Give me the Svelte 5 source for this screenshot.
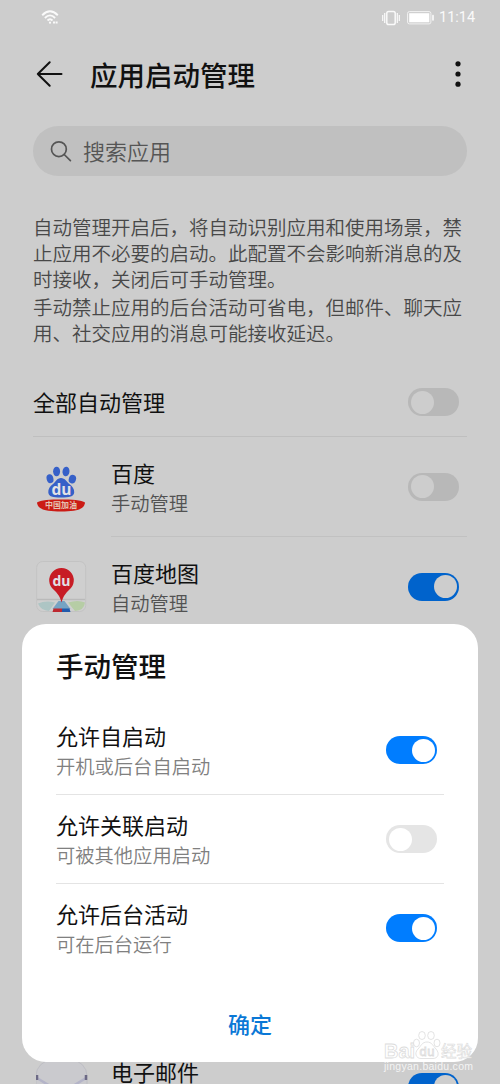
<script>
  let allAuto = $state(false);

  let apps = $state([
    { id: 'baidu', name: '百度', auto: false },
    { id: 'map', name: '百度地图', auto: true },
  ]);

  let mailAuto = $state(true);

  let options = $state([
    { name: '允许自启动', hint: '开机或后台自启动', on: true },
    { name: '允许关联启动', hint: '可被其他应用启动', on: false },
    { name: '允许后台活动', hint: '可在后台运行', on: true },
  ]);
</script>

{#snippet toggle(on, label, flip)}
  <button class="toggle" class:on role="switch" aria-checked={on} aria-label={label} onclick={flip}>
    <span class="knob"></span>
  </button>
{/snippet}

{#snippet appIcon(id)}
  {#if id === 'baidu'}
    <svg class="appIcon" viewBox="0 0 54 54">
      <g transform="translate(0 4.5)">
        <g fill="#3660c8">
          <ellipse cx="20.6" cy="7" rx="3.5" ry="4.8" />
          <ellipse cx="30" cy="7" rx="3.5" ry="4.8" transform="rotate(8 30 7)" />
          <ellipse cx="14" cy="14.2" rx="3.4" ry="4.5" transform="rotate(-14 14 14.2)" />
          <ellipse cx="36.4" cy="14.6" rx="3.6" ry="4.4" transform="rotate(18 36.4 14.6)" />
          <path d="M25 13.500c-4 0-5.500 4-8 6-3 2.300-5 5-4.700 8.500.6 4.300 4 5 12.700 5s12.600-.7 13.200-5c.3-3.500-2-6.200-4.800-8.500-2.600-2-4.400-6-8.400-6z" />
        </g>
        <text x="25.500" y="30.500" class="du" font-size="15.500">du</text>
        <path d="M1 38c3-2.500 14-3 24-3s21 .5 24 3c-.5 7-9 9-24 9S1.500 45 1 38z" fill="#cb1b15" />
        <text x="25" y="43.800" class="slogan">中国加油</text>
      </g>
    </svg>
  {:else if id === 'map'}
    <svg class="appIcon" viewBox="0 0 54 54">
      <rect x=".7" y="1.500" width="49" height="50" rx="6" fill="#cfcfcf" stroke="#c3c3c3" />
      <path d="M1 39.500h48" stroke="#bababa" stroke-width="1.400" />
      <path d="M2 43.500q8-3.500 17-1l-6 8.500Q5 50.500 2 43.500z" fill="#adc5c4" />
      <path d="M32 42.500q10-3 17 0-1 8-10 8.500z" fill="#b6cda5" />
      <path d="M22.500 41h6l6 8h-18z" fill="#76a3c3" />
      <path d="M17.500 48.500H26V52h-9.500z" fill="#bd2931" />
      <path d="M26 48.500h7.500l1 3.500H26z" fill="#225bac" />
      <path d="M25.500 42.500c-1.500-6-4-9-7.500-12.500a12.300 12.300 0 1 1 15 0c-3.500 3.500-6 6.500-7.500 12.500z" fill="#c71c25" />
      <text x="25.500" y="25.500" class="du" font-size="14">du</text>
    </svg>
  {:else}
    <svg class="appIcon" viewBox="0 0 54 54">
      <rect x="0" y="0" width="51" height="51" rx="16" fill="#cacace" stroke="#bebec4" />
      <path d="M1 18l13 8M50 18l-13 8" stroke="#b4b4c8" stroke-width="2.500" />
      <path d="M1 15v5M50 15v5" stroke="#6c6985" stroke-width="2.500" />
    </svg>
  {/if}
{/snippet}

<div class="screen">
  <div class="statusBar">
    <svg class="wifi" width="20" height="17" viewBox="0 0 20 17" fill="none" stroke="#fafafa" stroke-width="1.900">
      <path d="M1.200 6.200Q9 -1.500 16.800 6.200M3.900 9Q9 3.800 14.100 9M6.500 11.500Q9 9 11.500 11.500" />
      <circle cx="9" cy="13.700" r="1.100" fill="#fafafa" stroke="none" />
      <path d="M12 13.500h5" stroke-width="2.200" stroke-dasharray="2 .6" />
    </svg>
    <svg class="vibrate" width="18" height="16" viewBox="0 0 18 16" fill="none" stroke="#fafafa" stroke-width="1.500">
      <rect x="4.800" y="1.500" width="8.400" height="13" rx="1.800" />
      <path d="M2.700 3v10M15.300 3v10M.7 5v6M17.300 5v6" stroke-width="1.200" />
    </svg>
    <svg class="battery" width="28" height="14" viewBox="0 0 28 14">
      <rect x=".6" y=".6" width="23.300" height="12.300" rx="1.800" fill="none" stroke="#f2f2f2" />
      <rect x="2.200" y="2.200" width="20.100" height="9.100" fill="#fff" />
      <rect x="25" y="3.700" width="2" height="6" rx=".8" fill="#f2f2f2" />
    </svg>
    <span class="clock">11:14</span>
  </div>

  <header class="titleBar">
    <svg width="28" height="28" viewBox="0 0 28 28" fill="none" stroke="#111" stroke-width="2" stroke-linecap="round" stroke-linejoin="round">
      <path d="M14.700 2.300 2.800 14l11.900 11.700M2.800 14h23.700" />
    </svg>
    <h1>应用启动管理</h1>
    <svg width="8" height="28" viewBox="0 0 8 28" fill="#111">
      <circle cx="4" cy="3.800" r="2.600" />
      <circle cx="4" cy="14" r="2.600" />
      <circle cx="4" cy="24.200" r="2.600" />
    </svg>
  </header>

  <div class="searchBar">
    <svg width="22" height="22" viewBox="0 0 22 22" fill="none" stroke="#555" stroke-width="1.700" stroke-linecap="round">
      <circle cx="8.900" cy="9.200" r="7.400" />
      <path d="m14.200 14.500 6.200 6.200" />
    </svg>
    <span>搜索应用</span>
  </div>

  <div class="description">
    <p>自动管理开启后，将自动识别应用和使用场景，禁<br />止应用不必要的启动。此配置不会影响新消息的及<br />时接收，关闭后可手动管理。</p>
    <p>手动禁止应用的后台活动可省电，但邮件、聊天应<br />用、社交应用的消息可能接收延迟。</p>
  </div>

  <div class="allRow">
    <span class="name">全部自动管理</span>
    {@render toggle(allAuto, '全部自动管理', () => (allAuto = !allAuto))}
  </div>

  {#each apps as app (app.id)}
    <div class="appRow">
      {@render appIcon(app.id)}
      <div class="appBody">
        <div class="labels">
          <span class="name">{app.name}</span>
          <span class="hint">{app.auto ? '自动管理' : '手动管理'}</span>
        </div>
        {@render toggle(app.auto, app.name, () => (app.auto = !app.auto))}
      </div>
    </div>
  {/each}

  <div class="appRow mailRow">
    {@render appIcon('mail')}
    <div class="appBody">
      <span class="name">电子邮件</span>
      {@render toggle(mailAuto, '电子邮件', () => (mailAuto = !mailAuto))}
    </div>
  </div>

  <div class="dialog" role="dialog">
    <h2>手动管理</h2>
    {#each options as option}
      <div class="option">
        <div class="labels">
          <span class="name">{option.name}</span>
          <span class="hint">{option.hint}</span>
        </div>
        {@render toggle(option.on, option.name, () => (option.on = !option.on))}
      </div>
    {/each}
    <button class="confirm">确定</button>
  </div>

  <svg class="watermark" width="98" height="46" viewBox="0 0 98 46">
    <g fill="#fff" stroke="#dcdcdc" stroke-width=".8">
      <text x="1" y="27" font-size="21" font-weight="bold" textLength="31" lengthAdjust="spacingAndGlyphs">Bai</text>
      <ellipse cx="39" cy="4.500" rx="3.300" ry="4" />
      <ellipse cx="48" cy="4.500" rx="3.300" ry="4" />
      <ellipse cx="33.500" cy="12" rx="3" ry="3.800" />
      <ellipse cx="54" cy="12" rx="3" ry="3.800" />
      <path d="M44 11c-5 0-6 4-9 7-4 4-2 9.500 3 9.500h12c5 0 7-5 3-9.500-3-3-4-7-9-7z" />
      <text x="36.500" y="25" font-size="13" textLength="15">du</text>
      <text x="58" y="25.500" font-size="15.500" stroke-width=".6" textLength="31">经验</text>
    </g>
    <text x="1" y="39" font-size="10.500" fill="#f4f4f4" textLength="89">jingyan.baidu.com</text>
  </svg>
</div>

<style>
  :global(body) {
    margin: 0;
    background: #cdcdcd;
  }

  .screen {
    position: relative;
    width: 500px;
    height: 1084px;
    overflow: hidden;
    background: #cdcdcd;
    color: #111;
    font-family: 'Noto Sans CJK SC', sans-serif;
  }

  h1,
  h2,
  p {
    margin: 0;
  }

  button {
    border: none;
    padding: 0;
    cursor: pointer;
    font-family: inherit;
  }

  .statusBar {
    display: flex;
    align-items: center;
    height: 35px;
    padding: 0 26px 0 41px;
  }

  .vibrate {
    margin-left: auto;
    margin-right: 7px;
  }

  .clock {
    margin-left: 4px;
    width: 35px;
    padding-top: 1px;
    font-family: Roboto, sans-serif;
    font-size: 14.5px;
    line-height: 18px;
    color: #fafafa;
    white-space: nowrap;
  }

  .titleBar {
    display: flex;
    align-items: center;
    height: 78px;
    padding: 0 38px 0 35px;
  }

  .titleBar h1 {
    flex: 1;
    margin-left: 27px;
    padding-bottom: 1px;
    font-size: 27.5px;
    font-weight: 500;
    line-height: 40px;
  }

  .searchBar {
    display: flex;
    align-items: center;
    gap: 11px;
    box-sizing: border-box;
    height: 50px;
    margin: 13px 33px 0;
    padding-left: 17px;
    border-radius: 25px;
    background: #c0c0c0;
    color: #555;
    font-size: 22px;
  }

  .searchBar span {
    padding-bottom: 2px;
    font-weight: 350;
  }

  .description {
    display: flex;
    flex-direction: column;
    gap: 2px;
    height: 134px;
    padding: 38px 0 0 33px;
    font-size: 19.5px;
    font-weight: 350;
    line-height: 26px;
    color: #484848;
    white-space: nowrap;
  }

  .allRow {
    display: flex;
    align-items: center;
    justify-content: space-between;
    height: 68px;
    margin: 20px 33px 0;
    padding-right: 8px;
    border-bottom: 1px solid #bfbfbf;
  }

  .allRow .name {
    padding-bottom: 2px;
  }

  .name {
    font-size: 22px;
    line-height: 30px;
  }

  .hint {
    font-size: 19.3px;
    font-weight: 350;
    line-height: 30px;
    color: #525252;
  }

  .labels {
    display: flex;
    flex-direction: column;
    gap: 1px;
    padding-top: 1px;
  }

  .appRow {
    display: flex;
    align-items: center;
    height: 100px;
    margin-left: 36px;
    margin-right: 33px;
  }

  .appIcon {
    width: 54px;
    height: 54px;
    margin-right: 21px;
  }

  .appBody {
    flex: 1;
    display: flex;
    align-items: center;
    justify-content: space-between;
    box-sizing: border-box;
    height: 100px;
    padding-right: 8px;
    border-bottom: 1px solid #c1c1c1;
  }

  .mailRow {
    margin-top: 400px;
  }

  .mailRow .name {
    margin-bottom: 31px;
  }

  .du {
    fill: #e2e2e6;
    font-family: 'Open Sans', sans-serif;
    font-weight: bold;
    text-anchor: middle;
  }

  .slogan {
    fill: #e6c3b4;
    font-size: 8px;
    font-weight: bold;
    text-anchor: middle;
  }

  .toggle {
    display: flex;
    align-items: center;
    flex: none;
    box-sizing: border-box;
    width: 51px;
    height: 28px;
    padding: 0 2.5px;
    border-radius: 14px;
    background: #b8b8b8;
  }

  .toggle.on {
    justify-content: flex-end;
    background: #0063cc;
  }

  .knob {
    width: 23px;
    height: 23px;
    border-radius: 50%;
    background: #cdcdcd;
  }

  .dialog {
    position: absolute;
    left: 22px;
    top: 624px;
    display: flex;
    flex-direction: column;
    box-sizing: border-box;
    width: 456px;
    height: 438px;
    padding: 21px 34px 0;
    border-radius: 24px;
    background: #fff;
  }

  .dialog h2 {
    font-size: 27.5px;
    font-weight: 500;
    line-height: 40px;
    margin-bottom: 21px;
  }

  .option {
    display: flex;
    align-items: center;
    justify-content: space-between;
    box-sizing: border-box;
    height: 89px;
    padding-right: 7px;
    border-bottom: 1px solid #e4e4e4;
  }

  .option:nth-of-type(3) {
    border-bottom-color: transparent;
  }

  .dialog .hint {
    color: #808080;
  }

  .dialog .toggle {
    background: #e5e5e5;
  }

  .dialog .toggle.on {
    background: #007dff;
  }

  .dialog .knob {
    background: #fff;
  }

  .confirm {
    align-self: center;
    margin-top: 30px;
    background: none;
    color: #0a78d6;
    font-size: 22px;
    font-weight: 500;
    line-height: 40px;
  }

  .watermark {
    position: absolute;
    left: 383px;
    top: 1031px;
    font-family: 'Liberation Sans', 'Noto Sans CJK SC', sans-serif;
  }
</style>
